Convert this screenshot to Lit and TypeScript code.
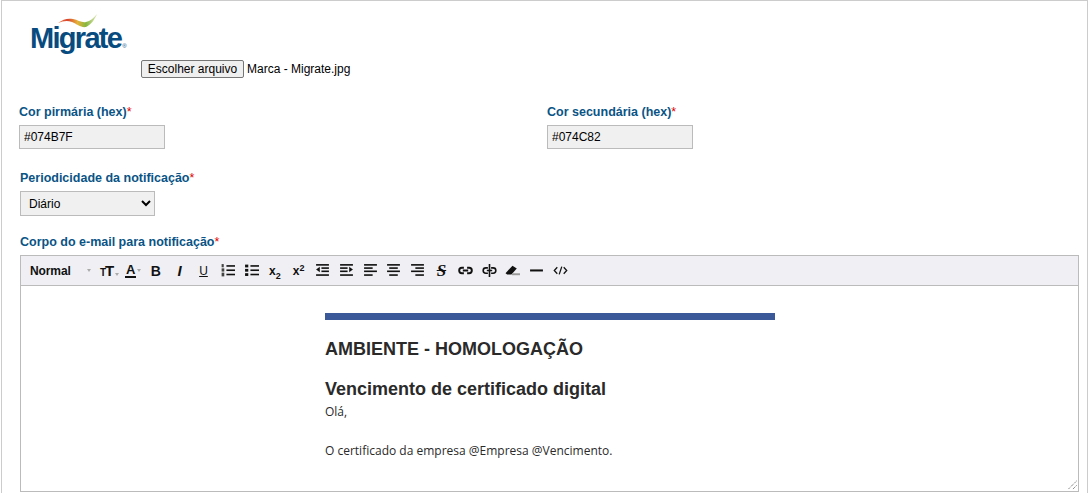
import { LitElement, css, html, svg } from "lit";
import { customElement } from "lit/decorators.js";

const lines = (rows: [number, number, number][]) =>
  rows.map(([x, y, w]) => svg`<rect x=${x} y=${y} width=${w} height="1.5" fill="#111"></rect>`);

const icons = {
  ol: svg`${lines([[6, 2, 8], [6, 6, 8], [6, 10, 8]])}<rect x="1.5" y="1" width="2" height="3" fill="#444"></rect><rect x="1.5" y="5" width="2.5" height="3" fill="#444"></rect><rect x="1.5" y="9" width="2.5" height="3.5" fill="#444"></rect>`,
  ul: svg`${lines([[6, 2, 8], [6, 6, 8], [6, 10, 8]])}<rect x="1" y="1.5" width="3" height="2.6" fill="#111"></rect><rect x="1" y="5.5" width="3" height="2.6" fill="#111"></rect><rect x="1" y="9.5" width="3" height="2.6" fill="#111"></rect>`,
  outdent: svg`${lines([[1, 1, 12], [6, 4, 7], [6, 7, 7], [1, 10.5, 12]])}<path d="M4.5 3.6v5L1 6.1z" fill="#111"></path>`,
  indent: svg`${lines([[1, 1, 12], [1, 4, 7], [1, 7, 7], [1, 10.5, 12]])}<path d="M9.5 3.6v5l3.5-2.5z" fill="#111"></path>`,
  left: svg`${lines([[1, 1, 12], [1, 4, 8], [1, 7, 12], [1, 10.5, 8]])}`,
  center: svg`${lines([[1, 1, 12], [3, 4, 8], [1, 7, 12], [3, 10.5, 8]])}`,
  right: svg`${lines([[1, 1, 12], [5, 4, 8], [1, 7, 12], [5, 10.5, 8]])}`,
  link: svg`<path d="M5.5 4.5H3.6a2.5 2.5 0 0 0 0 5h1.9M8.5 4.5h1.9a2.5 2.5 0 0 1 0 5H8.5M4.5 7h5" fill="none" stroke="#111" stroke-width="1.8"></path>`,
  unlink: svg`<path d="M5.5 4.5H3.6a2.5 2.5 0 0 0 0 5h1.9M8.5 4.5h1.9a2.5 2.5 0 0 1 0 5H8.5M4.5 7h5M7 1v12" fill="none" stroke="#111" stroke-width="1.5"></path>`,
  eraser: svg`<path d="M0.5 9.5 7 2.5l4 2.6-5 5.7H2z" fill="#111"></path><rect x="6.5" y="9.6" width="7.5" height="1.8" fill="#999"></rect>`,
  hr: svg`<rect x="1" y="6" width="12" height="1.9" fill="#111"></rect>`,
  code: svg`<path d="M4 4 1.2 7 4 10M10 4l2.8 3L10 10M8.2 3.4 5.8 10.6" fill="none" stroke="#111" stroke-width="1.2"></path>`,
};

const icon = (body: unknown) =>
  html`<span class="btn"><svg width="15" height="15" viewBox="0 0 14 14">${body}</svg></span>`;

@customElement("app-root")
export class AppRoot extends LitElement {
  render() {
    return html`
      <div class="page">
        <div class="logo">
          <svg class="swoosh" width="40" height="14" viewBox="0 0 40 14">
            <defs>
              <linearGradient id="sw" x1="0" x2="1" y1="0" y2="0">
                <stop offset="0" stop-color="#e8703a"></stop>
                <stop offset="0.25" stop-color="#d9442e"></stop>
                <stop offset="0.5" stop-color="#e6b23a"></stop>
                <stop offset="0.72" stop-color="#86b840"></stop>
                <stop offset="1" stop-color="#dfe6b8"></stop>
              </linearGradient>
            </defs>
            <path
              d="M0 9C5 5 10 4 15 5c5 1 9 4 13 3 4-1 8-4 11-8-2 5-6 11-11 13-5 1-9-3-14-5C9 6 5 7 0 9z"
              fill="url(#sw)"
            ></path>
          </svg>
          <span class="brand">Migrate<i>®</i></span>
        </div>
        <div class="file">
          <button class="choose">Escolher arquivo</button>
          <span>Marca - Migrate.jpg</span>
        </div>

        <div class="colors">
          <div class="field">
            <label>Cor pirmária (hex)<em>*</em></label>
            <input readonly .value=${"#074B7F"} />
          </div>
          <div class="field">
            <label>Cor secundária (hex)<em>*</em></label>
            <input readonly .value=${"#074C82"} />
          </div>
        </div>

        <div class="field period">
          <label>Periodicidade da notificação<em>*</em></label>
          <select><option>Diário</option></select>
        </div>

        <div class="field body-field">
          <label>Corpo do e-mail para notificação<em>*</em></label>
          <div class="editor">
            <div class="toolbar">
              <span class="normal">Normal</span>
              <span class="caret first"></span>
              <span class="size"><small>T</small><b>T</b><span class="caret"></span></span>
              <span class="color"><span class="a">A</span><span class="caret"></span></span>
              <span class="btn txt bold">B</span>
              <span class="btn txt ital">I</span>
              <span class="btn txt under">U</span>
              ${icon(icons.ol)} ${icon(icons.ul)}
              <span class="btn txt script"><span>x<sub>2</sub></span></span>
              <span class="btn txt script"><span>x<sup>2</sup></span></span>
              ${icon(icons.outdent)} ${icon(icons.indent)} ${icon(icons.left)}
              ${icon(icons.center)} ${icon(icons.right)}
              <span class="btn txt strike">S</span>
              ${icon(icons.link)} ${icon(icons.unlink)} ${icon(icons.eraser)}
              ${icon(icons.hr)} ${icon(icons.code)}
            </div>
            <div class="content">
              <div class="mail">
                <div class="bar"></div>
                <h2>AMBIENTE - HOMOLOGAÇÃO</h2>
                <h1>Vencimento de certificado digital</h1>
                <p>Olá,</p>
                <p class="gap">O certificado da empresa @Empresa @Vencimento.</p>
              </div>
              <svg class="grip" width="10" height="10" viewBox="0 0 10 10">
                <path d="M9.5 1 1 9.5M9.5 5.5 5.5 9.5" stroke="#555" stroke-dasharray="1 1"></path>
              </svg>
            </div>
          </div>
        </div>
      </div>
    `;
  }

  static styles = css`
    :host {
      display: block;
      font-family: "Liberation Sans", Arial, sans-serif;
      font-size: 12px;
      color: #000;
    }
    * {
      box-sizing: border-box;
    }
    .page {
      height: 493px;
      overflow: hidden;
      margin: 0 1px;
      border: solid #ccc;
      border-width: 1px 1px 0;
      padding: 0 8px 0 17px;
    }
    .logo {
      display: flex;
      flex-direction: column;
      height: 50px;
      padding: 13px 0 0 11px;
      width: 120px;
    }
    .swoosh {
      margin-left: 28px;
      flex: none;
    }
    .brand {
      margin-top: -3px;
      font-size: 29px;
      line-height: 26px;
      font-weight: 700;
      letter-spacing: -1.7px;
      color: #074b7f;
      white-space: nowrap;
    }
    .brand i {
      font-size: 6px;
      font-style: normal;
      font-weight: 400;
      letter-spacing: 0;
      margin-left: 1px;
    }
    .file {
      display: flex;
      align-items: center;
      gap: 3px;
      height: 20px;
      margin: 8px 0 0 122px;
    }
    .choose {
      width: 103px;
      height: 18px;
      padding: 0;
      font: 12px "Liberation Sans", Arial, sans-serif;
      background: #efefef;
      border: 1px solid #767676;
      border-radius: 2px;
      color: #000;
    }
    .colors {
      display: grid;
      grid-template-columns: 528px 1fr;
      margin-top: 26px;
    }
    .field {
      display: flex;
      flex-direction: column;
      align-items: flex-start;
    }
    label {
      font-weight: 700;
      font-size: 12.5px;
      line-height: 14px;
      color: #0a5486;
      margin-bottom: 6px;
    }
    em {
      font-style: normal;
      font-weight: 400;
      color: #e00000;
    }
    input {
      width: 146px;
      height: 24px;
      padding: 0 4px;
      font: 12px "Liberation Sans", Arial, sans-serif;
      color: #000;
      background: #f0f0f0;
      border: 1px solid #bbb;
      outline: none;
    }
    .period {
      margin: 22px 0 0 1px;
    }
    select {
      width: 135px;
      height: 25px;
      padding: 0 0 0 4px;
      font: 12px "Liberation Sans", Arial, sans-serif;
      color: #000;
      background-color: #f0f0f0;
      border: 1px solid #bbb;
      border-radius: 0;
    }
    .body-field {
      margin: 19px 0 0 1px;
    }
    .editor {
      width: 1059px;
      border: 1px solid #bbb;
    }
    .toolbar {
      display: flex;
      align-items: center;
      height: 30px;
      padding-left: 9px;
      background: #f0f0f4;
      border-bottom: 1px solid #bbb;
      color: #111;
    }
    .normal {
      width: 56px;
      font-size: 12px;
      font-weight: 700;
      letter-spacing: -0.1px;
    }
    .caret {
      display: inline-block;
      width: 0;
      height: 0;
      margin-left: 1px;
      border: 2.5px solid transparent;
      border-top: 3px solid #aaa;
      border-bottom: 0;
    }
    .caret.first {
      margin: 0 6px 0 1px;
    }
    .size {
      display: flex;
      align-items: baseline;
      width: 22px;
      margin-left: 3px;
    }
    .size small {
      font-size: 10px;
      font-weight: 700;
    }
    .size b {
      font-size: 15px;
      margin-left: -1px;
    }
    .color {
      display: flex;
      align-items: center;
      width: 19px;
      margin-left: 3px;
    }
    .a {
      display: block;
      font-size: 13px;
      line-height: 12px;
      font-weight: 700;
      padding: 0 1px;
      border-bottom: 2px solid #111;
    }
    .btn {
      display: flex;
      flex: none;
      align-items: center;
      justify-content: center;
      width: 23.8px;
      height: 20px;
    }
    .txt {
      font-weight: 700;
      font-size: 14px;
    }
    .ital {
      font-style: italic;
      font-size: 15px;
    }
    .under {
      text-decoration: underline;
      font-weight: 400;
      font-size: 12px;
    }
    .script {
      font-size: 12px;
    }
    .script sub,
    .script sup {
      font-size: 9px;
      line-height: 0;
    }
    .script sub {
      vertical-align: -4px;
    }
    .script sup {
      vertical-align: 4px;
    }
    .strike {
      font-family: "Liberation Serif", serif;
      font-style: italic;
      text-decoration: line-through;
      font-size: 17px;
    }
    .content {
      position: relative;
      height: 205px;
      background: #fff;
      overflow: hidden;
    }
    .mail {
      width: 450px;
      margin: 27px auto 0 304px;
      color: #2a2a2a;
    }
    .bar {
      height: 7px;
      background: #3b5998;
    }
    h2 {
      margin: 19px 0 0;
      font-size: 18px;
      line-height: 21px;
      font-weight: 700;
    }
    h1 {
      margin: 19px 0 0;
      font-size: 18px;
      line-height: 21px;
      font-weight: 700;
    }
    p {
      margin: 3px 0 0;
      font-family: "Open Sans", sans-serif;
      font-size: 12px;
      line-height: 17px;
    }
    .gap {
      margin-top: 22px;
    }
    .grip {
      position: absolute;
      right: 1px;
      bottom: 1px;
    }
  `;
}
